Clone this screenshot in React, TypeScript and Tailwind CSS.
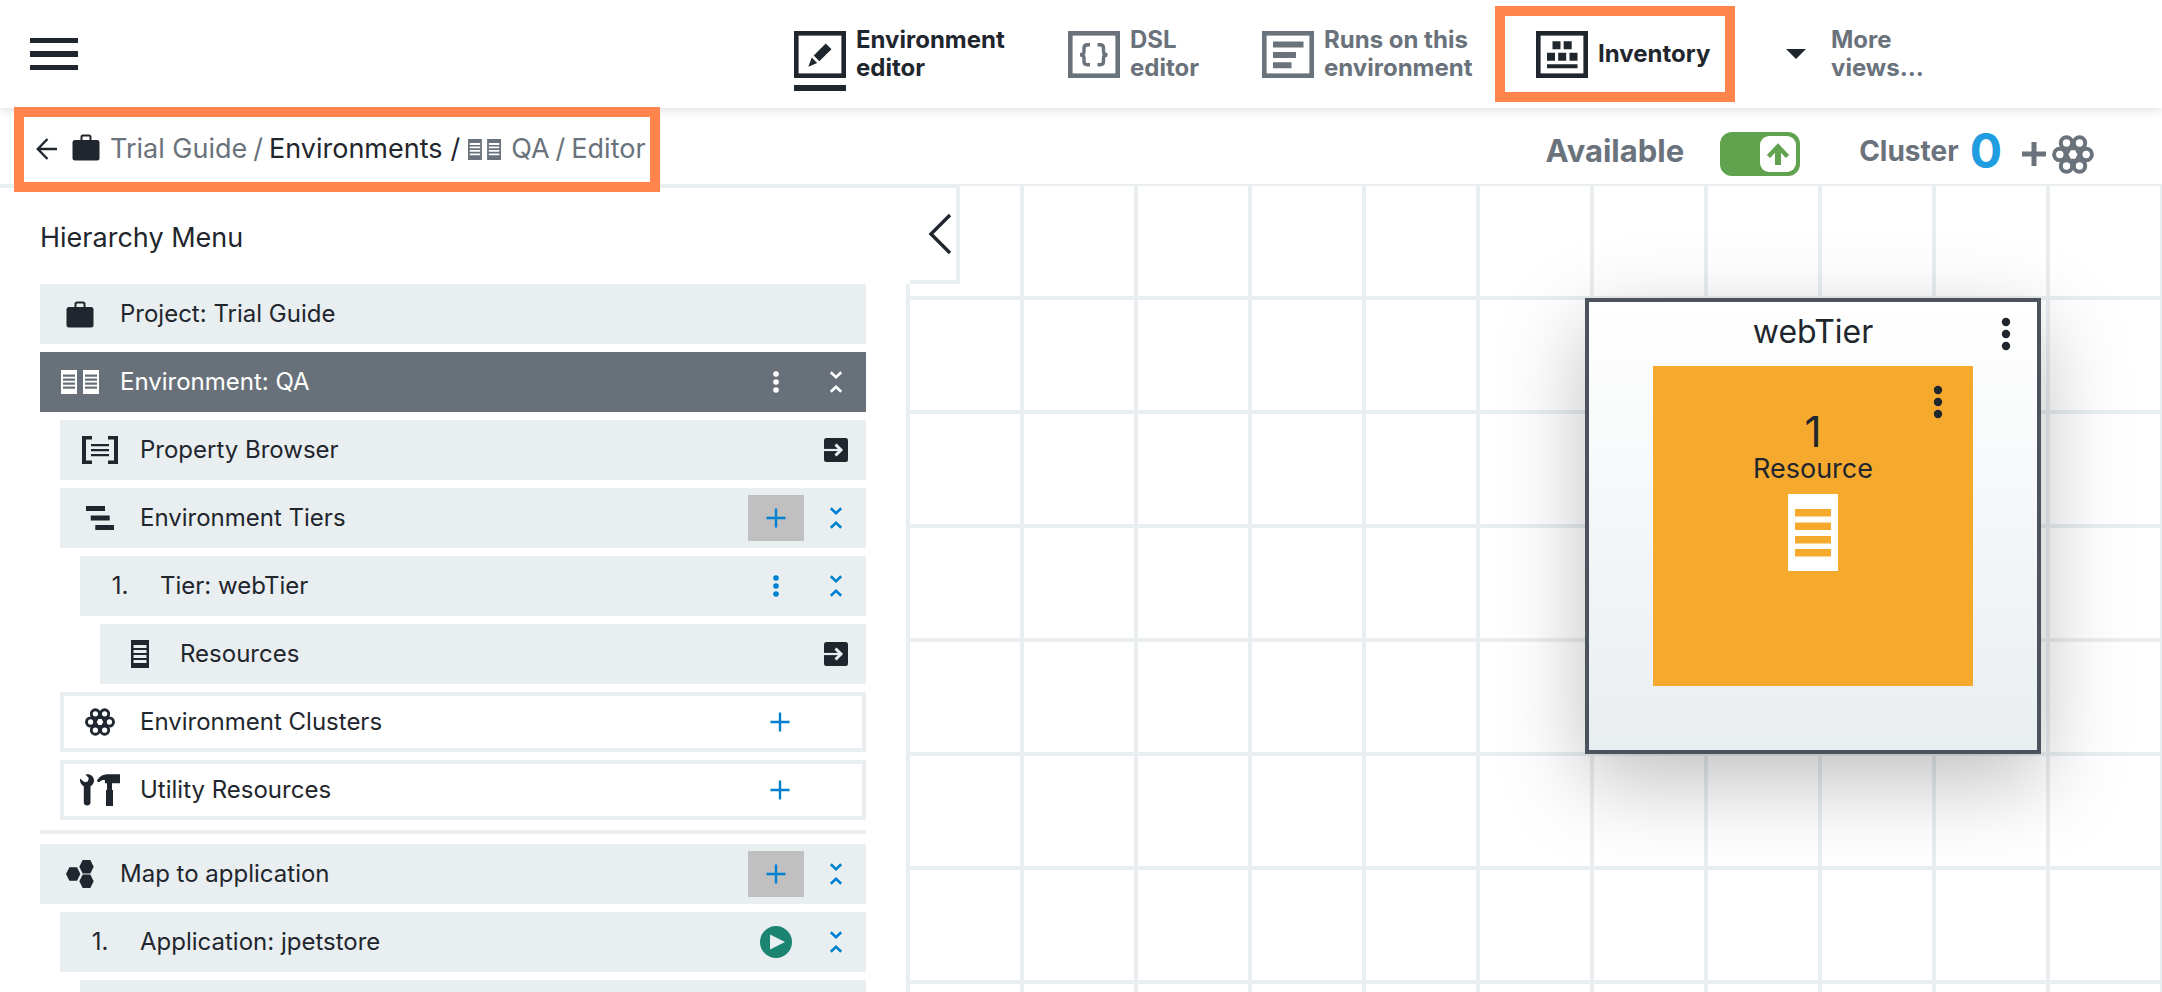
import type { ReactNode } from "react";

/* ---------- icons ---------- */

function Briefcase() {
  return (
    <svg width="28" height="27" viewBox="0 0 28 27" fill="currentColor" aria-hidden="true">
      <rect x="0.5" y="6" width="27" height="20.5" rx="2.5" />
      <path d="M9.5 7V3a1.5 1.5 0 0 1 1.5-1.5h6A1.5 1.5 0 0 1 18.500 3v4" fill="none" stroke="currentColor" strokeWidth="2" />
    </svg>
  );
}

function DoubleServer({ small = false }: { small?: boolean }) {
  const page = "h16v24h-16z";
  const slits = [4.5, 8.5, 12.5, 16.5].map((y) => `M2 ${y}v2.200h12v-2.200z`).join("");
  return (
    <svg width={small ? 33 : 38} height={small ? 21 : 24} viewBox="0 0 38 24" fill="currentColor" aria-hidden="true">
      <path fillRule="evenodd" d={`M0 0${page}${slits}`} />
      <path fillRule="evenodd" transform="translate(22 0)" d={`M0 0${page}${slits}`} />
    </svg>
  );
}

function PropertyIcon() {
  return (
    <svg width="36" height="28" viewBox="0 0 36 28" fill="currentColor" aria-hidden="true">
      <path d="M0 0h10v3.500H4v21h6V28H0zM36 0H26v3.500h6v21h-6V28h10zM9 8h18v2.200H9zM9 13h18v2.200H9zM9 18h18v2.200H9z" />
    </svg>
  );
}

function TiersIcon() {
  return (
    <svg width="28" height="24" viewBox="0 0 28 24" fill="currentColor" aria-hidden="true">
      <path d="M0 0h19v5H0zM4.700 9.500h19v5h-19zM9.300 19H28v5H9.300z" />
    </svg>
  );
}

function ServerIcon() {
  return (
    <svg width="18" height="28" viewBox="0 0 18 28" fill="currentColor" aria-hidden="true">
      <path
        fillRule="evenodd"
        d="M0 0h18v28H0zM2.500 5v3h13V5zM2.500 10v3h13v-3zM2.500 15v3h13v-3zM2.500 20v3h13v-3z"
      />
    </svg>
  );
}

function BigServerIcon() {
  return (
    <svg width="50" height="77" viewBox="0 0 50 77" fill="#fff" aria-hidden="true">
      <path
        fillRule="evenodd"
        d="M0 0h50v77H0zM7 15v7.500h36V15zM7 28.500V36h36v-7.500zM7 42v7.500h36V42zM7 55v7.500h36V55z"
      />
    </svg>
  );
}

function ClusterIcon({ large = false }: { large?: boolean }) {
  return (
    <svg
      width={large ? 42 : 30}
      height={large ? 39 : 28}
      viewBox="0 0 42 39"
      fill="none"
      stroke="currentColor"
      strokeWidth="4"
      aria-hidden="true"
    >
      <circle cx="14.500" cy="8" r="5.700" />
      <circle cx="27.500" cy="8" r="5.700" />
      <circle cx="7.800" cy="19.500" r="5.700" />
      <circle cx="34.200" cy="19.500" r="5.700" />
      <circle cx="14.500" cy="31" r="5.700" />
      <circle cx="27.500" cy="31" r="5.700" />
      <path d="M17.800 13.500h6.400l3.300 6-3.300 6h-6.400l-3.300-6z" strokeWidth="3.600" />
    </svg>
  );
}

function ToolsIcon() {
  return (
    <svg width="40" height="32" viewBox="0 0 40 32" fill="currentColor" aria-hidden="true">
      <path d="M5.500.600C9.500-.800 14 2 14 6.500c0 2.500-1.300 4.500-3.500 5.800V28.500c0 1.800-1.400 3-3.300 3s-3.400-1.200-3.400-3V12.300C1.500 11 .200 9 0 6.500L0 4.500l4.600 3.800 3.200-.9 1-3.200z" />
      <path d="M17 6.500C19.500 2.500 23 .300 27 .300h13v8.900H32V16h1v16h-7V16h1V9.200h-2V6.200c-2-.5-3.700 0-5.200 1.500-1 .7-2.800.2-2.800-1.200z" />
    </svg>
  );
}

function HexagonsIcon() {
  const hex = "M-7.200 0L-3.800-6.800H3.800L7.200 0 3.800 6.800H-3.800z";
  return (
    <svg width="28" height="28" viewBox="0 0 28 28" fill="currentColor" aria-hidden="true">
      <path transform="translate(7.200 14)" d={hex} />
      <path transform="translate(20.500 6.800)" d={hex} />
      <path transform="translate(20.500 21.200)" d={hex} />
    </svg>
  );
}

function Kebab({ large = false }: { large?: boolean }) {
  return (
    <svg width={large ? 12 : 8} height={large ? 36 : 24} viewBox="0 0 8 24" fill="currentColor" aria-hidden="true">
      <circle cx="4" cy="4" r="2.800" />
      <circle cx="4" cy="12" r="2.800" />
      <circle cx="4" cy="20" r="2.800" />
    </svg>
  );
}

function CollapseIcon() {
  return (
    <svg width="14" height="24" viewBox="0 0 14 24" fill="none" stroke="currentColor" strokeWidth="2.600" aria-hidden="true">
      <path d="M1.800 2.200L7 7.200l5.200-5M1.800 21.800L7 16.800l5.200 5" />
    </svg>
  );
}

function PlusIcon() {
  return (
    <svg width="20" height="20" viewBox="0 0 20 20" fill="none" stroke="currentColor" strokeWidth="2.400" aria-hidden="true">
      <path d="M10 .500v19M.500 10h19" />
    </svg>
  );
}

function OpenIcon() {
  return (
    <svg width="24" height="24" viewBox="0 0 24 24" aria-hidden="true">
      <rect width="24" height="24" rx="2.500" fill="#1f262d" />
      <path d="M0 12h16" stroke="#e9eef1" strokeWidth="2.200" />
      <path d="M11.500 6.500L17 12l-5.500 5.500" fill="none" stroke="#e9eef1" strokeWidth="3" />
    </svg>
  );
}

function PlayIcon() {
  return (
    <svg width="32" height="32" viewBox="0 0 32 32" aria-hidden="true">
      <circle cx="16" cy="16" r="16" fill="#1c8571" />
      <path d="M10 8.500L25 16l-15 7.500z" fill="#e9eef1" />
    </svg>
  );
}

function FramedIcon({ children }: { children: ReactNode }) {
  return (
    <svg width="52" height="47" viewBox="0 0 52 47" fill="currentColor" aria-hidden="true">
      <rect x="2.300" y="2.300" width="47.400" height="42.400" fill="none" stroke="currentColor" strokeWidth="4.600" />
      {children}
    </svg>
  );
}

/* ---------- header ---------- */

type ViewTabProps = { icon: ReactNode; lines: string[]; active?: boolean; muted?: boolean };

function ViewTab({ icon, lines, active, muted }: ViewTabProps) {
  return (
    <a
      href="#view"
      className={`flex items-center gap-2.5 text-2xl leading-7 font-bold ${muted ? "text-[#6a727b]" : "text-[#1f262d]"}`}
    >
      <span className="relative">
        {icon}
        {active && <span className="absolute top-[54px] left-0 h-1.5 w-full bg-[#1f262d]" />}
      </span>
      <span>
        {lines.map((line) => (
          <span key={line} className="block whitespace-nowrap">
            {line}
          </span>
        ))}
      </span>
    </a>
  );
}

function Header() {
  return (
    <header className="relative z-10 flex h-[108px] shrink-0 items-center bg-white shadow-[0_2px_10px_rgba(0,0,0,0.13)]">
      <div className="w-[794px] shrink-0 pl-[30px]">
        <button type="button" aria-label="Open main menu" className="flex w-12 flex-col gap-2">
          <span className="h-[5px] bg-[#1f262d]" />
          <span className="h-[6px] bg-[#1f262d]" />
          <span className="h-[5px] bg-[#1f262d]" />
        </button>
      </div>
      <nav aria-label="Views" className="flex items-center">
        <div className="w-[274px]">
          <ViewTab
            active
            lines={["Environment", "editor"]}
            icon={
              <FramedIcon>
                <path d="M31.700 12.500L37.500 18.300 25.300 30.300 19.700 24.500zM14.300 35.800L17.800 26.500 23.200 32z" />
              </FramedIcon>
            }
          />
        </div>
        <div className="w-[194px]">
          <ViewTab
            muted
            lines={["DSL", "editor"]}
            icon={
              <FramedIcon>
                <path
                  d="M22 13.800h-2.500c-2.500 0-3.500 1-3.500 3.200v3.500c0 2-1 3.300-4 3.300 3 0 4 1.300 4 3.300v3.500c0 2.200 1 3.200 3.500 3.200H22M29.500 13.800H32c2.500 0 3.500 1 3.500 3.200v3.500c0 2 1 3.300 4 3.300-3 0-4 1.300-4 3.300v3.500c0 2.200-1 3.200-3.500 3.200h-2.500"
                  fill="none"
                  stroke="currentColor"
                  strokeWidth="3.400"
                />
              </FramedIcon>
            }
          />
        </div>
        <div className="w-[233px]">
          <ViewTab
            muted
            lines={["Runs on this", "environment"]}
            icon={
              <FramedIcon>
                <path d="M11 10.500h30.500v6H11zM11 21h23v6H11zM11 31.300h18.500v6H11z" />
              </FramedIcon>
            }
          />
        </div>
        <div className="flex h-24 w-60 items-center border-10 border-[#ff854d] pl-[31px]">
          <ViewTab
            lines={["Inventory"]}
            icon={
              <FramedIcon>
                <path d="M16.500 10.200h8v8h-8zM27.700 10.200h8v8h-8zM11 21.700h8v8h-8zM22.200 21.700h8v8h-8zM33.500 21.700h8v8h-8zM11 33.300h30.500v4H11z" />
              </FramedIcon>
            }
          />
        </div>
        <button
          type="button"
          className="ml-[51px] flex items-center gap-[25px] text-left text-2xl leading-7 font-bold text-[#6a727b]"
        >
          <svg width="20" height="10" viewBox="0 0 20 10" fill="#1f262d" aria-hidden="true">
            <path d="M0 0h20L10 10z" />
          </svg>
          <span>
            More
            <br />
            views...
          </span>
        </button>
      </nav>
    </header>
  );
}

/* ---------- breadcrumb and status ---------- */

function Breadcrumb() {
  return (
    <nav
      aria-label="Breadcrumb"
      className="relative z-20 ml-3.5 flex h-[78px] w-[646px] items-center gap-1.5 pt-1 pl-[22px] text-[27px] whitespace-nowrap text-[#6a727b]"
    >
      <span className="pointer-events-none absolute inset-x-0 -top-px -bottom-1.5 border-10 border-[#ff854d]" />
      <a href="#back" aria-label="Back" className="mr-[9px] text-[#1f262d]">
        <svg width="21" height="22" viewBox="0 0 21 22" fill="none" stroke="currentColor" strokeWidth="2.400" aria-hidden="true">
          <path d="M21 11H2M11.500 1L1.800 11l9.700 10" />
        </svg>
      </a>
      <span className="mr-1 pb-1 text-[#1f262d]">
        <Briefcase />
      </span>
      <a href="#project">Trial Guide</a>
      <span>/</span>
      <a href="#environments" className="text-[#1f262d]">
        Environments
      </a>
      <span className="mr-0.5 ml-0.5 text-[#1f262d]">/</span>
      <DoubleServer small />
      <a href="#qa" className="ml-1">
        QA
      </a>
      <span>/</span>
      <span>Editor</span>
    </nav>
  );
}

function StatusBar() {
  return (
    <div className="ml-auto flex h-[76px] items-center pt-4 pr-[68px] font-bold text-[#6a727b]">
      <label htmlFor="available" className="pb-1.5 text-[31px] leading-10">
        Available
      </label>
      <span className="relative ml-9 block h-11 w-20">
        <input
          id="available"
          type="checkbox"
          role="switch"
          defaultChecked
          className="block h-full w-full appearance-none rounded-xl bg-[#61a24f]"
        />
        <span className="pointer-events-none absolute top-1 right-1 flex size-9 items-center justify-center rounded-[9px] bg-white">
          <svg width="24" height="24" viewBox="0 0 24 24" fill="none" stroke="#61a24f" aria-hidden="true">
            <path d="M12 23V4" strokeWidth="6" />
            <path d="M2.500 14.500L12 4.500l9.500 10" strokeWidth="4.500" />
          </svg>
        </span>
      </span>
      <span className="ml-[59px] pb-1.5 text-[28px] leading-10">Cluster</span>
      <span className="ml-[11px] pb-1.5 text-5xl leading-10 text-[#209ce0]">0</span>
      <button type="button" aria-label="Add cluster" className="ml-5 flex items-center gap-1.5">
        <svg width="24" height="24" viewBox="0 0 24 24" fill="none" stroke="currentColor" strokeWidth="5" aria-hidden="true">
          <path d="M12 0v24M0 12h24" />
        </svg>
        <ClusterIcon large />
      </button>
    </div>
  );
}

/* ---------- hierarchy ---------- */

type Level = 0 | 1 | 2 | 3;
const indent: Record<Level, string> = { 0: "ml-0", 1: "ml-5", 2: "ml-10", 3: "ml-15" };

type RowProps = {
  level?: Level;
  icon?: ReactNode;
  label?: string;
  selected?: boolean;
  outlined?: boolean;
  action?: "menu" | "add" | "run";
  end?: "collapse" | "open";
};

function Row({ level = 0, icon, label, selected, outlined, action, end }: RowProps) {
  const tone = selected ? "bg-[#68717a] text-white" : outlined ? "border-4 border-[#e9eef1] bg-white" : "bg-[#e9eef1]";
  const accent = selected ? "text-white" : "text-[#0080cf]";
  return (
    <li className={`flex h-15 shrink-0 items-center text-2xl ${indent[level]} ${tone}`}>
      <span className={`flex shrink-0 justify-center ${outlined ? "mr-1 w-18" : "w-20"}`}>{icon}</span>
      <span className="flex-1">{label}</span>
      {action && (
        <button
          type="button"
          aria-label={`${action} ${label}`}
          className={`flex h-[46px] w-14 items-center justify-center ${accent} ${outlined ? "mr-[54px]" : "mr-0.5"} ${
            action === "add" && !outlined ? "bg-[#c0c0c0]" : ""
          }`}
        >
          {action === "menu" && <Kebab />}
          {action === "add" && <PlusIcon />}
          {action === "run" && <PlayIcon />}
        </button>
      )}
      {end && (
        <button type="button" aria-label={`${end} ${label}`} className={`flex h-full w-15 items-center justify-center ${accent}`}>
          {end === "collapse" ? <CollapseIcon /> : <OpenIcon />}
        </button>
      )}
    </li>
  );
}

function HierarchyPanel() {
  return (
    <aside className="relative z-10 flex w-[910px] shrink-0 flex-col">
      <div className="flex h-[98px] shrink-0 items-center border-t-2 border-[#e9eef1] bg-white pt-1 pl-10">
        <h2 className="text-[27px]">Hierarchy Menu</h2>
      </div>
      <button
        type="button"
        aria-label="Collapse panel"
        className="absolute top-0 left-full flex h-[98px] w-[50px] items-center justify-end border-t-2 border-r-4 border-b-4 border-[#e9eef1] bg-white pr-1"
      >
        <svg width="24" height="42" viewBox="0 0 24 42" fill="none" stroke="#1f262d" strokeWidth="3.400" aria-hidden="true">
          <path d="M22 2L3 21l19 19" />
        </svg>
      </button>
      <div className="flex-1 border-r-4 border-[#e9eef1] bg-white px-10">
        <ul className="flex flex-col gap-2">
          <Row icon={<Briefcase />} label="Project: Trial Guide" />
          <Row icon={<DoubleServer />} label="Environment: QA" selected action="menu" end="collapse" />
          <Row level={1} icon={<PropertyIcon />} label="Property Browser" end="open" />
          <Row level={1} icon={<TiersIcon />} label="Environment Tiers" action="add" end="collapse" />
          <Row level={2} icon="1." label="Tier: webTier" action="menu" end="collapse" />
          <Row level={3} icon={<ServerIcon />} label="Resources" end="open" />
          <Row level={1} icon={<ClusterIcon />} label="Environment Clusters" outlined action="add" />
          <Row level={1} icon={<ToolsIcon />} label="Utility Resources" outlined action="add" />
        </ul>
        <hr className="my-2.5 h-1 border-0 bg-[#e9eef1]" />
        <ul className="flex flex-col gap-2">
          <Row icon={<HexagonsIcon />} label="Map to application" action="add" end="collapse" />
          <Row level={1} icon="1." label="Application: jpetstore" action="run" end="collapse" />
          <Row level={2} />
        </ul>
      </div>
    </aside>
  );
}

/* ---------- canvas ---------- */

function TierNode() {
  return (
    <section className="absolute top-28 left-[675px] h-[456px] w-[456px] border-4 border-[#4c525e] bg-linear-to-b from-white to-[#e9eef1] shadow-[0_28px_80px_rgba(0,0,0,0.25)]">
      <h3 className="mb-1 h-15 text-center text-[32px] leading-[60px]">webTier</h3>
      <button type="button" aria-label="webTier menu" className="absolute top-3.5 right-[25px]">
        <Kebab large />
      </button>
      <div className="relative mx-auto flex h-80 w-80 flex-col items-center bg-[#f5aa2d] pt-[46px]">
        <button type="button" aria-label="Resource menu" className="absolute top-[18px] right-[29px]">
          <Kebab large />
        </button>
        <span className="text-[42px] leading-10">1</span>
        <span className="mb-2 text-[27px] leading-[34px]">Resource</span>
        <BigServerIcon />
      </div>
    </section>
  );
}

export default function App() {
  return (
    <div className="flex h-screen flex-col overflow-hidden bg-white font-['Inter',sans-serif] text-[#1f262d]">
      <Header />
      <div className="relative z-20 flex h-[78px] shrink-0 items-start border-b-2 border-[#e9eef1]">
        <Breadcrumb />
        <StatusBar />
      </div>
      <main className="flex min-h-0 flex-1">
        <HierarchyPanel />
        <div className="relative flex-1 overflow-hidden bg-[linear-gradient(to_right,transparent_110px,#e9eef1_110px),linear-gradient(to_bottom,transparent_110px,#e9eef1_110px)] bg-size-[114px_114px]">
          <TierNode />
        </div>
      </main>
    </div>
  );
}
